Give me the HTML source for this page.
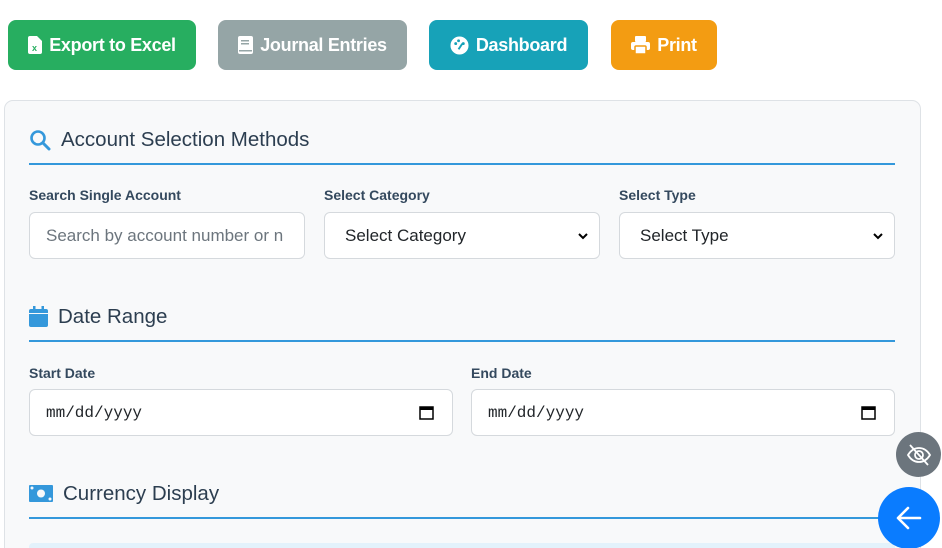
<!DOCTYPE html>
<html><head><meta charset="utf-8"><style>
*{box-sizing:border-box;margin:0;padding:0}
html,body{width:942px;height:548px;overflow:hidden}
body{background:#fff;font-family:"Liberation Sans",sans-serif;position:relative}
.btn{position:absolute;top:20px;height:50px;border-radius:8px;color:#fff;font-weight:bold;font-size:18px;display:flex;align-items:center;justify-content:center;gap:7px;letter-spacing:-0.3px}
.card{position:absolute;left:4px;top:100px;width:917px;height:460px;background:#f8f9fa;border:1px solid #dee2e6;border-radius:9px}
.h{position:absolute;left:29px;width:866px;height:41px;padding-bottom:8px;border-bottom:2px solid #3498db;font-size:20.5px;color:#2c3e50;display:flex;align-items:center;gap:10px}
.lbl{position:absolute;font-size:14px;font-weight:bold;color:#34495e}
.inp{position:absolute;height:47px;background:#fff;border:1px solid #d5d9dd;border-radius:6px;display:flex;align-items:center;padding:0 16px;font-size:17px;color:#212529}
.chev{position:absolute;right:10px;top:17px}
.date{font-family:"Liberation Mono",monospace;font-size:16px}
</style></head><body>
<div class="btn" style="left:8px;width:188px;background:#27ae60">
<svg width="14" height="18" viewBox="0 0 14 18"><path d="M0 2a2 2 0 012-2h7l5 5v11a2 2 0 01-2 2H2a2 2 0 01-2-2z" fill="#fff"/><text x="4" y="15" font-size="9" fill="#27ae60" font-family="Liberation Sans">x</text></svg>Export to Excel</div>
<div class="btn" style="left:218px;width:189px;background:#95a5a6">
<svg width="15" height="18" viewBox="0 0 15 18"><rect x="0" y="0" width="15" height="18" rx="2" fill="#fff"/><rect x="3" y="4" width="8" height="1.5" fill="#95a5a6"/><rect x="3" y="7" width="8" height="1.5" fill="#95a5a6"/><rect x="1" y="14" width="13" height="1.5" fill="#95a5a6"/></svg>Journal Entries</div>
<div class="btn" style="left:429px;width:159px;background:#17a2b8">
<svg width="19" height="19" viewBox="0 0 20 20"><circle cx="10" cy="10" r="9.5" fill="#fff"/><circle cx="6" cy="8" r="1.5" fill="#17a2b8"/><circle cx="9" cy="5" r="1.5" fill="#17a2b8"/><circle cx="14" cy="8" r="1.5" fill="#17a2b8"/><path d="M9 14l4-6" stroke="#17a2b8" stroke-width="2"/></svg>Dashboard</div>
<div class="btn" style="left:611px;width:106px;background:#f39c12">
<svg width="19" height="18" viewBox="0 0 19 18"><rect x="4" y="0" width="11" height="6" rx="1" fill="#fff"/><rect x="0" y="6" width="19" height="8" rx="2" fill="#fff"/><rect x="4" y="10" width="11" height="8" rx="1" fill="#fff" stroke="#f39c12" stroke-width="1.5"/></svg>Print</div>

<div class="card"></div>
<div class="h" style="top:124px"><svg width="22" height="22" viewBox="0 0 22 22"><circle cx="9" cy="9" r="6.5" fill="none" stroke="#3498db" stroke-width="2.6"/><path d="M14 14l6 6" stroke="#3498db" stroke-width="3" stroke-linecap="round"/></svg>Account Selection Methods</div>
<div class="lbl" style="left:29px;top:187px">Search Single Account</div>
<div class="lbl" style="left:324px;top:187px">Select Category</div>
<div class="lbl" style="left:619px;top:187px">Select Type</div>
<div class="inp" style="left:29px;top:212px;width:276px;color:#6c757d;white-space:nowrap;overflow:hidden">Search by account number or n</div>
<div class="inp" style="left:324px;top:212px;width:276px;padding-left:20px">Select Category<svg class="chev" width="12" height="12" viewBox="0 0 12 12"><path d="M2 4l4 4 4-4" fill="none" stroke="#000" stroke-width="2"/></svg></div>
<div class="inp" style="left:619px;top:212px;width:276px;padding-left:20px">Select Type<svg class="chev" width="12" height="12" viewBox="0 0 12 12"><path d="M2 4l4 4 4-4" fill="none" stroke="#000" stroke-width="2"/></svg></div>

<div class="h" style="top:301px"><svg width="19" height="21" viewBox="0 0 19 21"><rect x="0" y="3" width="19" height="18" rx="2" fill="#3498db"/><rect x="4" y="0" width="2.5" height="5" fill="#3498db"/><rect x="12.5" y="0" width="2.5" height="5" fill="#3498db"/><rect x="0" y="7" width="19" height="1" fill="#f8f9fa"/></svg>Date Range</div>
<div class="lbl" style="left:29px;top:365px">Start Date</div>
<div class="lbl" style="left:471px;top:365px">End Date</div>
<div class="inp date" style="left:29px;top:389px;width:424px">mm/dd/yyyy<svg style="position:absolute;right:18px;top:15px" width="15" height="15" viewBox="0 0 15 15"><rect x="1" y="2" width="13" height="12" fill="none" stroke="#000" stroke-width="1.5"/><rect x="1" y="2" width="13" height="3" fill="#000"/></svg></div>
<div class="inp date" style="left:471px;top:389px;width:424px">mm/dd/yyyy<svg style="position:absolute;right:18px;top:15px" width="15" height="15" viewBox="0 0 15 15"><rect x="1" y="2" width="13" height="12" fill="none" stroke="#000" stroke-width="1.5"/><rect x="1" y="2" width="13" height="3" fill="#000"/></svg></div>

<div class="h" style="top:478px"><svg width="24" height="17" viewBox="0 0 24 17"><rect width="24" height="17" rx="1" fill="#3498db"/><circle cx="12" cy="8.5" r="4" fill="#f8f9fa"/><circle cx="3" cy="3" r="1.5" fill="#f8f9fa"/><circle cx="21" cy="14" r="1.5" fill="#f8f9fa"/></svg>Currency Display</div>
<div style="position:absolute;left:29px;top:543px;width:866px;height:10px;background:#e3f2fb;border-radius:4px"></div>

<div style="position:absolute;left:896px;top:432px;width:45px;height:45px;border-radius:50%;background:#6c757d;display:flex;align-items:center;justify-content:center">
<svg width="26" height="26" viewBox="0 0 26 26" fill="none" stroke="#fff" stroke-width="1.8"><path d="M2 13c3-5 7-7 11-7s8 2 11 7c-3 5-7 7-11 7s-8-2-11-7z"/><circle cx="13" cy="13" r="4"/><path d="M4 3l18 20"/></svg></div>
<div style="position:absolute;left:878px;top:487px;width:62px;height:62px;border-radius:50%;background:#0a7cff;display:flex;align-items:center;justify-content:center">
<svg width="28" height="28" viewBox="0 0 28 28" fill="none" stroke="#fff" stroke-width="2.6" stroke-linecap="round" stroke-linejoin="round"><path d="M25 14H4M13 4L3 14l10 10"/></svg></div>
</body></html>
